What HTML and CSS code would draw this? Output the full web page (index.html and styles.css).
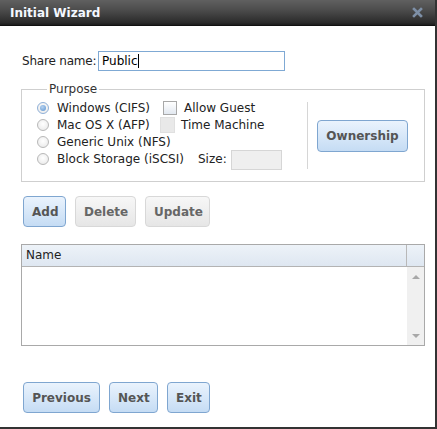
FILE: index.html
```html
<!DOCTYPE html>
<html>
<head>
<meta charset="utf-8">
<link rel="stylesheet" href="styles.css">
</head>
<body>
<div class="window">
  <div class="titlebar">
    <span class="title">Initial Wizard</span>
    <svg class="close" width="11" height="11" viewBox="0 0 11 11"><path d="M2 2 L9 9 M9 2 L2 9" stroke="#7d8fa6" stroke-width="2.6" stroke-linecap="square"/></svg>
  </div>
  <div class="content">
    <div class="share-row">
      <label class="lbl">Share name:</label>
      <div class="input">Public<span class="caret"></span></div>
    </div>
    <fieldset class="purpose">
      <legend>Purpose</legend>
      <div class="purpose-body">
        <div class="options">
          <div class="row">
            <span class="cell c1"><span class="radio checked"></span>Windows (CIFS)</span>
            <span class="check"></span><span>Allow Guest</span>
          </div>
          <div class="row">
            <span class="cell c2"><span class="radio"></span>Mac OS X (AFP)</span>
            <span class="check disabled"></span><span>Time Machine</span>
          </div>
          <div class="row">
            <span class="cell"><span class="radio"></span>Generic Unix (NFS)</span>
          </div>
          <div class="row">
            <span class="cell c4"><span class="radio"></span>Block Storage (iSCSI)</span>
            <span class="size-lbl">Size:</span><span class="size-input"></span>
          </div>
        </div>
        <div class="sep"></div>
        <div class="own-wrap"><button class="btn blue own">Ownership</button></div>
      </div>
    </fieldset>
    <div class="actions">
      <button class="btn blue">Add</button>
      <button class="btn gray">Delete</button>
      <button class="btn gray">Update</button>
    </div>
    <div class="grid">
      <div class="grid-head">
        <div class="col-name">Name</div>
        <div class="col-pad"></div>
      </div>
      <div class="grid-body">
        <div class="rows"></div>
        <div class="scroll">
          <span class="arr up"></span>
          <span class="arr down"></span>
        </div>
      </div>
    </div>
    <div class="nav">
      <button class="btn blue">Previous</button>
      <button class="btn blue">Next</button>
      <button class="btn blue">Exit</button>
    </div>
  </div>
</div>
</body>
</html>
```
FILE: styles.css
```css
* { box-sizing: border-box; }
html, body { margin: 0; padding: 0; background: #fff; }
body { font-family: "DejaVu Sans", Verdana, sans-serif; font-size: 12px; color: #222; }

.window {
  width: 437px;
  height: 429px;
  border-right: 2px solid #333;
  border-bottom: 2px solid #333;
  background: #fff;
}

.titlebar {
  height: 26px;
  background: linear-gradient(#606060 0%, #4c4c4c 40%, #2b2b2b 90%, #1c1c1c 100%);
  border-bottom: 1px solid #111;
  display: flex;
  align-items: center;
  justify-content: space-between;
  padding: 0 12px 0 10px;
}
.title { color: #f4f8ff; font-weight: bold; font-size: 12px; }
.close { flex: none; }

.content { padding: 25px 10px 0 21px; }

.share-row { display: flex; align-items: center; height: 20px; }
.lbl { margin-left: 1px; width: 76px; flex: none; white-space: nowrap; color: #222; letter-spacing: -0.2px; }
.input {
  width: 187px; height: 20px;
  border: 1px solid #7fa9d4;
  padding: 0 3px;
  line-height: 18px;
  color: #000;
  display: flex; align-items: center;
}
.caret { display: inline-block; width: 1px; height: 14px; background: #000; }

.purpose {
  margin: 11px 0 0 0;
  width: 404px;
  height: 100px;
  border: 1px solid #cfcfcf;
  padding: 0 0 0 15px;
}
.purpose legend { padding: 0 2px; margin-left: 10px; color: #333; line-height: 14px; }
.purpose-body { display: flex; height: 83px; }
.options { width: 270px; padding-top: 3px; }
.row { display: flex; align-items: center; height: 17px; }
.cell { display: flex; align-items: center; white-space: nowrap; }
.c1 { width: 126px; }
.c2 { width: 123px; }
.c4 { width: 161px; }
.radio {
  width: 12px; height: 12px; border-radius: 50%;
  border: 1px solid #b8b8b8;
  background: radial-gradient(circle at 50% 40%, #fff 0%, #e6e6e6 100%);
  margin-right: 8px;
  position: relative;
  flex: none;
}
.radio.checked { border-color: #8fb0d8; }
.radio.checked::after {
  content: ""; position: absolute; left: 2px; top: 2px;
  width: 6px; height: 6px; border-radius: 50%;
  background: radial-gradient(circle at 40% 35%, #b6d2f0, #5b93cf);
}
.check {
  width: 14px; height: 14px; border: 1px solid #a8a8a8;
  background: linear-gradient(#fff, #e2e8f0);
  margin-right: 7px; flex: none;
}
.check.disabled { width: 15px; height: 16px; border-color: #e0e0e0; background: #e9e9e9; margin-right: 6px; }
.size-lbl { margin-right: 4px; }
.size-input { width: 51px; height: 20px; border: 1px solid #d6d6d6; background: #efefef; margin-top: 2px; }

.sep { width: 1px; background: #d6d6d6; margin: 6px 0 10px 0; }
.own-wrap { display: flex; align-items: center; padding-left: 9px; }

.btn {
  font-family: "DejaVu Sans", Verdana, sans-serif;
  font-size: 12px;
  font-weight: bold;
  height: 31px;
  border-radius: 4px;
  padding: 0 8px;
  cursor: default;
}
.btn.blue {
  color: #555;
  border: 1px solid #7fa6d0;
  background: linear-gradient(#eaf3fd, #c5dcf4);
}
.btn.gray {
  color: #666;
  border: 1px solid #d8d8d8;
  background: linear-gradient(#f7f7f7, #e6e6e6);
}
.own { width: 91px; height: 32px; color: #777; margin-top: -3px; }

.actions { display: flex; gap: 9px; margin: 14px 0 0 2px; }
.actions .btn:nth-child(1) { width: 43px; }
.actions .btn:nth-child(2) { width: 61px; }
.actions .btn:nth-child(3) { width: 65px; }

.grid {
  margin-top: 17px;
  width: 404px;
  height: 102px;
  border: 1px solid #a9a9a9;
  display: flex; flex-direction: column;
}
.grid-head {
  height: 22px;
  display: flex;
  background: linear-gradient(#edf2f8, #dee7f1);
  border-bottom: 1px solid #b3b3b3;
}
.col-name { flex: 1; padding-left: 4px; line-height: 21px; color: #222; border-right: 1px solid #b8b8b8; }
.col-pad { width: 17px; }
.grid-body { flex: 1; display: flex; }
.rows { flex: 1; }
.scroll {
  width: 17px;
  background: #f0f0f0;
  display: flex; flex-direction: column; justify-content: space-between; align-items: center;
  padding: 8px 0 7px;
}
.arr { width: 0; height: 0; border-left: 4px solid transparent; border-right: 4px solid transparent; }
.arr.up { border-bottom: 4px solid #a8a8a8; }
.arr.down { border-top: 4px solid #a8a8a8; }

.nav { display: flex; gap: 9px; margin: 36px 0 0 2px; }
.nav .btn:nth-child(1) { width: 77px; }
.nav .btn:nth-child(2) { width: 49px; }
.nav .btn:nth-child(3) { width: 43px; }
```
